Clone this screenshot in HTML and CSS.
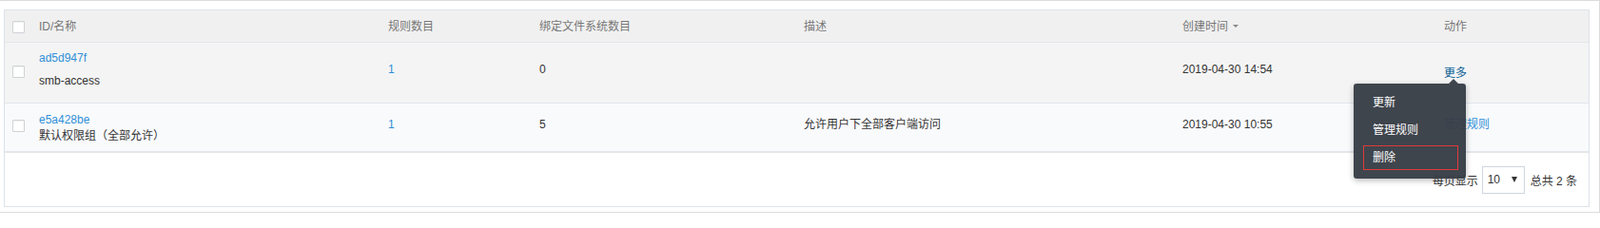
FILE: index.html
```html
<!DOCTYPE html>
<html lang="zh-CN">
<head>
<meta charset="utf-8">
<title>权限组</title>
<link rel="stylesheet" href="styles.css">
</head>
<body>
<div class="frame">
  <div class="panel">
    <div class="row head">
      <div class="cell chk"><span class="box"></span></div>
      <div class="cell">ID/名称</div>
      <div class="cell">规则数目</div>
      <div class="cell">绑定文件系统数目</div>
      <div class="cell">描述</div>
      <div class="cell">创建时间<span class="caret"></span></div>
      <div class="cell">动作</div>
    </div>
    <div class="row r1">
      <div class="cell chk"><span class="box"></span></div>
      <div class="cell idcell"><a class="link">ad5d947f</a><span class="name">smb-access</span></div>
      <div class="cell val"><a class="link">1</a></div>
      <div class="cell val">0</div>
      <div class="cell val"></div>
      <div class="cell val">2019-04-30 14:54</div>
      <div class="cell act"><a class="more">更多</a></div>
    </div>
    <div class="row r2">
      <div class="cell chk"><span class="box"></span></div>
      <div class="cell idcell"><a class="link">e5a428be</a><span class="name">默认权限组（全部允许）</span></div>
      <div class="cell val"><a class="link">1</a></div>
      <div class="cell val">5</div>
      <div class="cell val">允许用户下全部客户端访问</div>
      <div class="cell val">2019-04-30 10:55</div>
      <div class="cell val"><a class="link">管理规则</a></div>
    </div>
    <div class="footer">
      <span>每页显示</span>
      <span class="select"><span>10</span><span class="tri"></span></span>
      <span>总共 2 条</span>
    </div>
    <div class="menu">
      <div class="item">更新</div>
      <div class="item">管理规则</div>
      <div class="item danger">删除</div>
    </div>
  </div>
</div>
</body>
</html>
```
FILE: styles.css
```css
* { box-sizing: border-box; }
html, body { margin: 0; padding: 0; background: #fff; }
body {
  font-family: "Liberation Sans", "Noto Sans CJK SC", sans-serif;
  font-size: 12px;
  color: #333;
}
.frame {
  width: 1682px;
  height: 224px;
  border: 1px solid #dcdcdc;
  border-left: none;
  padding: 9px 10px 5px 4px;
}
.panel {
  position: relative;
  height: 208px;
  border: 1px solid #dde2e9;
}
.row {
  display: grid;
  grid-template-columns: 28px 367px 159px 278px 398px 275px 1fr;
  border-bottom: 1px solid #e2e6ed;
}
.cell { padding-left: 8px; line-height: 18px; white-space: nowrap; }
.cell.chk { padding-left: 8px; }
.box {
  display: block;
  width: 13px;
  height: 13px;
  background: #fff;
  border: 1px solid #cfd2d6;
  border-radius: 1px;
  box-shadow: inset 0 1px 1px rgba(0,0,0,0.06);
}
.head {
  height: 34px;
  background: #f0f0f0;
  color: #777;
  align-items: center;
}
.head .box { margin-top: 1px; }
.caret {
  display: inline-block;
  margin-left: 5px;
  vertical-align: middle;
  border-left: 3px solid transparent;
  border-right: 3px solid transparent;
  border-top: 3px solid #888;
  position: relative;
  top: -1px;
}
.r1 { height: 64px; background: #f4f4f4; }
.r2 { height: 51px; background: #f9fafc; }
.r1 .chk { padding-top: 24px; }
.r2 .chk { padding-top: 17px; }
.idcell { display: flex; flex-direction: column; align-items: flex-start; line-height: 17px; }
.r1 .idcell { padding-top: 8px; }
.r1 .idcell .name { margin-top: 7px; }
.r2 .idcell { padding-top: 9px; }
.r1 .val { padding-top: 19px; }
.r2 .val { padding-top: 13px; }
.r1 .act { padding-top: 23px; }
.link { color: #2f8fd8; text-decoration: none; }
.more { color: #0b5f95; text-decoration: none; }
.footer {
  height: 57px;
  border-top: 1px solid #e6e6e6;
  display: flex;
  justify-content: flex-end;
  align-items: center;
  padding-right: 12px;
  color: #333;
}
.select {
  display: inline-flex;
  align-items: center;
  justify-content: space-between;
  width: 45px;
  height: 29px;
  margin: 0 6px 0 4px;
  padding: 0 7px 0 5px;
  border: 1px solid #cdd6e0;
  background: #fff;
}
.tri {
  width: 0;
  height: 0;
  border-left: 3.5px solid transparent;
  border-right: 3.5px solid transparent;
  border-top: 6px solid #333;
}
.menu {
  position: absolute;
  left: 1418px;
  top: 77px;
  width: 118px;
  height: 100px;
  padding-top: 6px;
  background: rgba(55, 61, 70, 0.96);
  border-radius: 3px;
  box-shadow: 0 2px 6px rgba(0, 0, 0, 0.28);
  color: #fff;
}
.menu::before {
  content: "";
  position: absolute;
  top: -5px;
  left: 100px;
  border-left: 5px solid transparent;
  border-right: 5px solid transparent;
  border-bottom: 5px solid rgba(55, 61, 70, 0.96);
}
.item {
  height: 29px;
  line-height: 29px;
  padding-left: 20px;
}
.item.danger {
  height: 26px;
  line-height: 24px;
  margin: 1px 8px 0 10px;
  padding-left: 9px;
  border: 1px solid #e03a3a;
}
```
